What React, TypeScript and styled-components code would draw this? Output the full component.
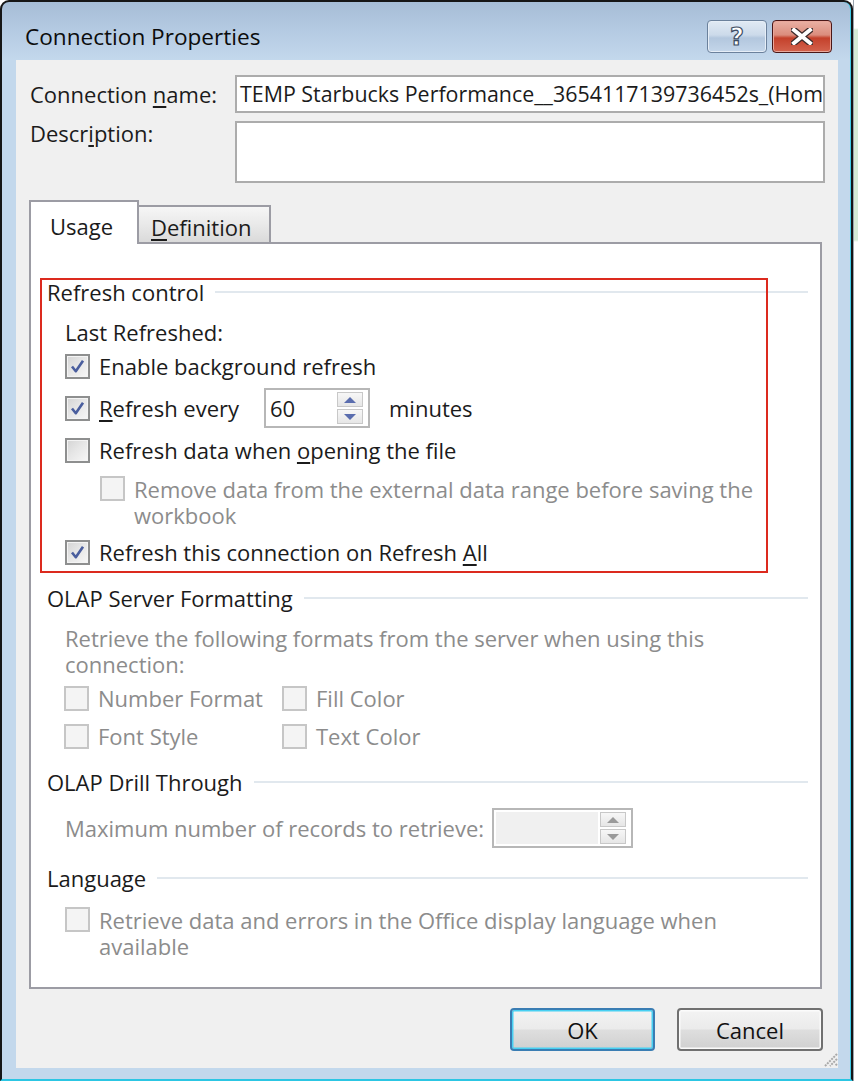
import React from "react";
import styled, { createGlobalStyle } from "styled-components";

const Global = createGlobalStyle`
  html, body { margin: 0; padding: 0; background: #ffffff; }
  body { font-family: "Open Sans", "Noto Sans", sans-serif; font-size: 22px; color: #1b1b1b; }
  * { box-sizing: border-box; }
`;

const Screen = styled.div`
  display: flex;
  width: 858px;
  height: 1086px;
  overflow: hidden;
  background: #ffffff;
`;

const Window = styled.div`
  position: relative;
  flex: none;
  width: 853px;
  height: 1081px;
  display: flex;
  flex-direction: column;
  padding: 0 13px 11px 14px;
  border: 2px solid #161616;
  border-bottom: 2px solid #2cc6e3;
  border-radius: 9px 9px 0 0;
  box-shadow: inset -1px 0 0 #3fcbe8;
  background: linear-gradient(#a6bdd6 0px, #b5cbe3 30px, #c3d8ec 58px, #c3d8ec 100%);
`;

const TitleBar = styled.div`
  height: 58px;
  display: flex;
  align-items: flex-start;
  justify-content: space-between;
`;

const Title = styled.div`
  margin: 21px 0 0 9px;
  font-size: 22.6px;
  line-height: 28px;
  color: #0c0c0c;
`;

const Caption = styled.div`
  display: flex;
  gap: 5px;
  margin: 18px 6px 0 0;
`;

const CapButton = styled.div<{ $close?: boolean }>`
  width: 60px;
  height: 33px;
  border-radius: 4px;
  display: flex;
  align-items: center;
  justify-content: center;
  border: 1px solid ${(p) => (p.$close ? "#4a1717" : "#6b819c")};
  box-shadow: inset 0 0 0 1px ${(p) => (p.$close ? "#e9a89c" : "#e6eef7")};
  background: ${(p) =>
    p.$close
      ? "linear-gradient(#eab0a4 0%, #db8d7d 45%, #c4412b 55%, #d3634e 100%)"
      : "linear-gradient(#e1eaf4 0%, #ccdaea 45%, #b3c7de 55%, #c4d6ea 100%)"};
`;

const HelpGlyph = styled.span`
  font-family: "DejaVu Sans", sans-serif;
  font-weight: bold;
  font-size: 24px;
  line-height: 24px;
  color: #ffffff;
  -webkit-text-stroke: 1.2px #3d4d63;
`;

const Client = styled.div`
  position: relative;
  flex: 1;
  display: flex;
  flex-direction: column;
  padding: 15px 15px 0 13px;
  background: #f0f0f0;
`;

const FieldGrid = styled.div`
  display: grid;
  grid-template-columns: 206px 590px;
  row-gap: 8px;
`;

const FieldLabel = styled.div<{ $top?: boolean }>`
  padding-left: 1px;
  line-height: 26px;
  align-self: ${(p) => (p.$top ? "start" : "center")};
  margin-top: ${(p) => (p.$top ? "-1px" : "0")};
`;

const TextBox = styled.div<{ $h: number }>`
  height: ${(p) => p.$h}px;
  border: 2px solid #acacac;
  background: #ffffff;
  padding: 0 0 0 3px;
  font-size: 21.4px;
  line-height: 34px;
  white-space: nowrap;
  overflow: hidden;
`;

const Acc = styled.span`
  text-decoration: underline;
  text-decoration-thickness: 1.5px;
  text-underline-offset: 3px;
`;

const TabStrip = styled.div`
  position: relative;
  z-index: 1;
  display: flex;
  align-items: flex-end;
  margin-top: 17px;
  margin-bottom: -2px;
`;

const Tab = styled.div<{ $active?: boolean }>`
  line-height: 26px;
  white-space: nowrap;
  ${(p) =>
    p.$active
      ? `
    width: 110px; height: 44px; padding: 11px 0 0 19px;
    background: #ffffff;
    border: 2px solid #9c9ca4; border-bottom: none;
  `
      : `
    width: 132px; height: 37px; margin-bottom: 2px; padding: 7px 0 0 12px;
    background: linear-gradient(#f6f6f6, #e9e9e9 50%, #dadada);
    border: 2px solid #9c9ca4; border-left: none; border-bottom: none;
  `}
`;

const Panel = styled.div`
  position: relative;
  width: 793px;
  height: 747px;
  padding: 35px 12px 0 16px;
  border: 2px solid #9c9ca4;
  background: #ffffff;
`;

const Highlight = styled.div`
  position: absolute;
  left: 9px;
  top: 34px;
  width: 728px;
  height: 295px;
  border: 2px solid #dc2a1e;
  pointer-events: none;
`;

const SectionHead = styled.div<{ $mt?: number }>`
  display: flex;
  align-items: center;
  gap: 11px;
  height: 26px;
  line-height: 26px;
  margin-top: ${(p) => p.$mt ?? 0}px;
  white-space: nowrap;
  &::after {
    content: "";
    flex: 1;
    height: 2px;
    background: #e1e8ee;
  }
`;

const Row = styled.div<{ $mt?: number; $indent?: number; $top?: boolean }>`
  display: flex;
  align-items: ${(p) => (p.$top ? "flex-start" : "center")};
  gap: 9px;
  margin-top: ${(p) => p.$mt ?? 0}px;
  margin-left: ${(p) => p.$indent ?? 18}px;
`;

const Text = styled.div<{ $disabled?: boolean; $w?: number }>`
  line-height: 26px;
  white-space: nowrap;
  color: ${(p) => (p.$disabled ? "#8c8c8c" : "#1b1b1b")};
  ${(p) => (p.$w ? `width: ${p.$w}px; flex: none;` : "")}
`;

const CheckGrid = styled.div<{ $mt?: number }>`
  display: grid;
  grid-template-columns: 218px auto;
  row-gap: 12px;
  margin: ${(p) => p.$mt ?? 0}px 0 0 17px;
`;

const Box = styled.span<{ $disabled?: boolean }>`
  flex: none;
  width: 25px;
  height: 25px;
  display: flex;
  align-items: center;
  justify-content: center;
  border: 2px solid ${(p) => (p.$disabled ? "#c6c6c6" : "#8e8f8f")};
  box-shadow: inset 0 0 0 1px #f4f4f4;
  background: ${(p) =>
    p.$disabled
      ? "#f4f4f4"
      : "linear-gradient(135deg, #d4d4d4 0%, #e6e6e6 45%, #f7f7f7 100%)"};
`;

const Checkbox: React.FC<{ checked?: boolean; disabled?: boolean }> = ({ checked, disabled }) => (
  <Box $disabled={disabled}>
    {checked && (
      <svg width="17" height="17" viewBox="0 0 17 17">
        <path d="M3 8.5 L6.8 13.2 L14 2.8" fill="none" stroke="#4a5e9e" strokeWidth="2.6" strokeLinejoin="round" />
      </svg>
    )}
  </Box>
);

const Spin = styled.div<{ $w: number }>`
  flex: none;
  width: ${(p) => p.$w}px;
  height: 40px;
  display: flex;
  gap: 2px;
  padding: 2px 5px 2px 2px;
  border: 2px solid #b7b7b7;
  background: #ffffff;
`;

const SpinField = styled.div<{ $disabled?: boolean }>`
  flex: 1;
  padding-left: 2px;
  line-height: 32px;
  background: ${(p) => (p.$disabled ? "#f0f0f0" : "#ffffff")};
`;

const SpinButtons = styled.div`
  width: 26px;
  display: flex;
  flex-direction: column;
  gap: 2px;
`;

const SpinBtn = styled.div`
  flex: 1;
  display: flex;
  align-items: center;
  justify-content: center;
  border: 1px solid #c8c8c8;
  background: linear-gradient(#f7f7f7, #e6e6e6);
`;

const Arrow: React.FC<{ down?: boolean; color: string }> = ({ down, color }) => (
  <svg width="12" height="6" viewBox="0 0 12 6">
    <path d={down ? "M0 0 H12 L6 6 Z" : "M0 6 H12 L6 0 Z"} fill={color} />
  </svg>
);

const Spinner: React.FC<{ w: number; value?: string; disabled?: boolean }> = ({ w, value, disabled }) => {
  const c = disabled ? "#9a9a9a" : "#5a6dae";
  return (
    <Spin $w={w}>
      <SpinField $disabled={disabled}>{value}</SpinField>
      <SpinButtons>
        <SpinBtn>
          <Arrow color={c} />
        </SpinBtn>
        <SpinBtn>
          <Arrow down color={c} />
        </SpinBtn>
      </SpinButtons>
    </Spin>
  );
};

const ButtonRow = styled.div`
  display: flex;
  justify-content: flex-end;
  gap: 22px;
  margin-top: 19px;
`;

const DialogButton = styled.button<{ $default?: boolean; $w: number }>`
  width: ${(p) => p.$w}px;
  height: 43px;
  padding: 0;
  font-family: "Open Sans", "Noto Sans", sans-serif;
  font-size: 22px;
  color: #111111;
  border-radius: 4px;
  border: 2px solid ${(p) => (p.$default ? "#3a7db3" : "#707070")};
  box-shadow: inset 0 0 0 1.5px ${(p) => (p.$default ? "#48d0f2" : "#fbfbfb")};
  background: linear-gradient(#f3f3f3 0%, #ebebeb 48%, #dedede 52%, #d0d0d0 100%);
`;

const Grip = styled.svg`
  position: absolute;
  right: 0;
  bottom: 1px;
`;

const ExcelEdge = styled.div`
  flex: 1;
  height: 1081px;
  background: linear-gradient(#ffffff 0px, #ffffff 28px, #d6ead6 30px, #d6ead6 240px, #ffffff 242px);
  border-left: 1px solid #9aa3ad;
`;

export default function App() {
  return (
    <Screen>
      <Global />
      <Window>
        <TitleBar>
          <Title>Connection Properties</Title>
          <Caption>
            <CapButton>
              <HelpGlyph>?</HelpGlyph>
            </CapButton>
            <CapButton $close>
              <svg width="22" height="17" viewBox="0 0 22 17">
                <path d="M3 2 L19 15 M19 2 L3 15" stroke="#3b2a2a" strokeWidth="6.5" strokeLinecap="square" />
                <path d="M3 2 L19 15 M19 2 L3 15" stroke="#ffffff" strokeWidth="4" strokeLinecap="square" />
              </svg>
            </CapButton>
          </Caption>
        </TitleBar>
        <Client>
          <FieldGrid>
            <FieldLabel>
              Connection <Acc>n</Acc>ame:
            </FieldLabel>
            <TextBox $h={38}>TEMP Starbucks Performance__3654117139736452s_(Hom</TextBox>
            <FieldLabel $top>
              Descr<Acc>i</Acc>ption:
            </FieldLabel>
            <TextBox $h={62} />
          </FieldGrid>

          <TabStrip>
            <Tab $active>
              Usa<Acc>g</Acc>e
            </Tab>
            <Tab>
              <Acc>D</Acc>efinition
            </Tab>
          </TabStrip>

          <Panel>
            <SectionHead>Refresh control</SectionHead>
            <Row $mt={14}>
              <Text>Last Refreshed:</Text>
            </Row>
            <Row $mt={8}>
              <Checkbox checked />
              <Text>
                Enable back<Acc>g</Acc>round refresh
              </Text>
            </Row>
            <Row $mt={9}>
              <Checkbox checked />
              <Text $w={156}>
                <Acc>R</Acc>efresh every
              </Text>
              <Spinner w={106} value="60" />
              <Text style={{ marginLeft: 10 }}>minutes</Text>
            </Row>
            <Row $mt={9}>
              <Checkbox />
              <Text>
                Refresh data when <Acc>o</Acc>pening the file
              </Text>
            </Row>
            <Row $mt={13} $indent={53} $top>
              <Checkbox disabled />
              <Text $disabled>
                Remove data from the external data range before saving the
                <br />
                workbook
              </Text>
            </Row>
            <Row $mt={11}>
              <Checkbox checked />
              <Text>
                Refresh this connection on Refresh <Acc>A</Acc>ll
              </Text>
            </Row>

            <SectionHead $mt={20}>OLAP Server Formatting</SectionHead>
            <Row $mt={14}>
              <Text $disabled>
                Retrieve the following formats from the server when using this
                <br />
                connection:
              </Text>
            </Row>
            <CheckGrid $mt={8}>
              <Row $indent={0}>
                <Checkbox disabled />
                <Text $disabled>Number Format</Text>
              </Row>
              <Row $indent={0}>
                <Checkbox disabled />
                <Text $disabled>Fill Color</Text>
              </Row>
              <Row $indent={0}>
                <Checkbox disabled />
                <Text $disabled>Font Style</Text>
              </Row>
              <Row $indent={0}>
                <Checkbox disabled />
                <Text $disabled>Text Color</Text>
              </Row>
            </CheckGrid>

            <SectionHead $mt={20}>OLAP Drill Through</SectionHead>
            <Row $mt={13}>
              <Text $disabled $w={418}>
                Maximum number of records to retrieve:
              </Text>
              <Spinner w={141} disabled />
            </Row>

            <SectionHead $mt={17}>Language</SectionHead>
            <Row $mt={16} $top>
              <Checkbox disabled />
              <Text $disabled>
                Retrieve data and errors in the Office display language when
                <br />
                available
              </Text>
            </Row>
            <Highlight />
          </Panel>

          <ButtonRow>
            <DialogButton $default $w={145}>
              OK
            </DialogButton>
            <DialogButton $w={146}>Cancel</DialogButton>
          </ButtonRow>

          <Grip width="18" height="18" viewBox="0 0 18 18">
            <path d="M17 5 L5 17 M17 10 L10 17 M17 15 L15 17" stroke="#a9a9a9" strokeWidth="2" strokeDasharray="2 1" />
          </Grip>
        </Client>
      </Window>
      <ExcelEdge />
    </Screen>
  );
}
